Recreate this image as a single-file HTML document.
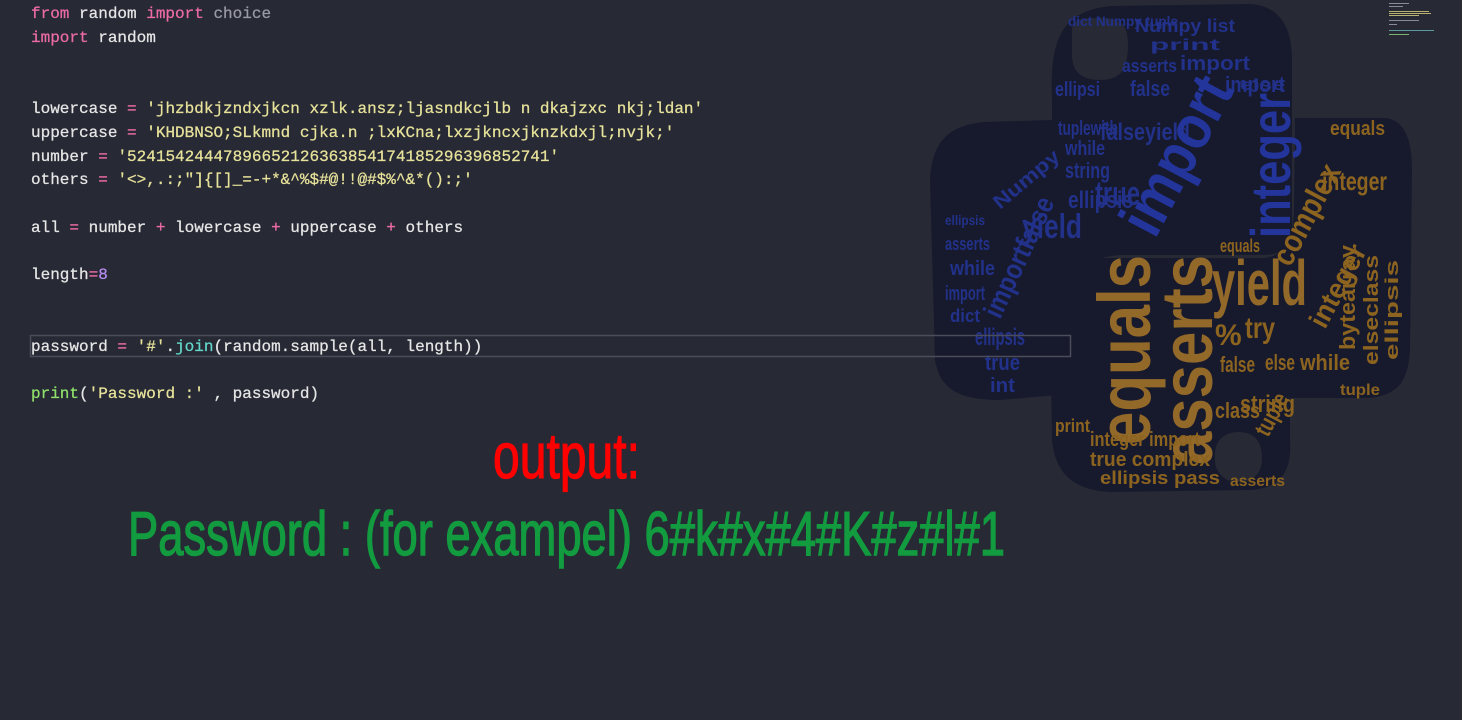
<!DOCTYPE html>
<html><head><meta charset="utf-8"><style>
html,body{margin:0;padding:0;background:#272935;width:1462px;height:720px;overflow:hidden;position:relative}
.c{position:absolute;left:31px;font:16px "Liberation Mono",monospace;color:#e6e6e6;white-space:pre;line-height:20px;-webkit-text-stroke:0.25px currentColor}
.k{color:#ec6ba6}.s{color:#e7e29a}.g{color:#9a9aa5}.p{color:#8fe06a}.n{color:#b58cf0}.t{color:#62d6c8}
svg{position:absolute;left:0;top:0}
</style></head><body>
<svg width="1462" height="720" viewBox="0 0 1462 720">
<path d="M1052,100 C1050,40 1060,12 1110,6 L1250,4 C1282,6 1292,30 1292,60 L1292,235 C1290,250 1280,255 1260,255 L1120,255 C1080,258 1062,280 1060,320 L1058,395 L1000,400 C960,400 940,390 935,360 L930,180 C932,140 950,125 985,122 L1052,120 Z M1072,30 C1072,20 1080,18 1100,18 C1122,18 1128,25 1128,45 C1128,70 1120,80 1100,80 C1080,80 1072,70 1072,55 Z" fill="#171a2c" fill-rule="evenodd"/>
<path d="M1295,118 L1385,118 C1405,120 1412,140 1412,170 L1410,350 C1408,385 1395,395 1370,398 L1290,398 L1290,440 C1292,470 1282,488 1250,490 L1110,492 C1070,490 1055,470 1052,440 L1050,310 C1052,272 1070,258 1110,258 L1265,258 C1285,255 1293,240 1294,210 Z M1215,455 C1215,440 1225,432 1238,432 C1255,432 1262,442 1262,458 C1262,475 1252,482 1238,482 C1224,482 1215,472 1215,460 Z" fill="#171a2c" fill-rule="evenodd"/>
<g font-family="Liberation Sans,sans-serif" font-weight="bold" fill="#22318a" lengthAdjust="spacingAndGlyphs">
<text x="1068" y="26" font-size="14" textLength="110" lengthAdjust="spacingAndGlyphs">dict Numpy tuple</text>
<text x="1135" y="32" font-size="18" textLength="100" lengthAdjust="spacingAndGlyphs">Numpy list</text>
<text x="1150" y="50" font-size="16" textLength="70" lengthAdjust="spacingAndGlyphs">print</text>
<text x="1180" y="70" font-size="20" textLength="70" lengthAdjust="spacingAndGlyphs">import</text>
<text x="1122" y="72" font-size="18" textLength="55" lengthAdjust="spacingAndGlyphs">asserts</text>
<text x="1130" y="96" font-size="22" textLength="40" lengthAdjust="spacingAndGlyphs">false</text>
<text x="1055" y="96" font-size="20" textLength="45" lengthAdjust="spacingAndGlyphs">ellipsi</text>
<text x="1225" y="92" font-size="22" textLength="60" lengthAdjust="spacingAndGlyphs">import</text>
<text x="1058" y="135" font-size="20" textLength="60" lengthAdjust="spacingAndGlyphs">tuplewith</text>
<text x="1065" y="155" font-size="20" textLength="40" lengthAdjust="spacingAndGlyphs">while</text>
<text x="1100" y="140" font-size="24" textLength="90" lengthAdjust="spacingAndGlyphs">falseyield</text>
<text x="1065" y="178" font-size="22" textLength="45" lengthAdjust="spacingAndGlyphs">string</text>
<text x="1068" y="208" font-size="24" textLength="65" lengthAdjust="spacingAndGlyphs">ellipsis</text>
<text x="945" y="225" font-size="14" textLength="40" lengthAdjust="spacingAndGlyphs">ellipsis</text>
<text x="945" y="250" font-size="18" textLength="45" lengthAdjust="spacingAndGlyphs">asserts</text>
<text x="950" y="275" font-size="20" textLength="45" lengthAdjust="spacingAndGlyphs">while</text>
<text x="945" y="300" font-size="20" textLength="40" lengthAdjust="spacingAndGlyphs">import</text>
<text x="950" y="322" font-size="18" textLength="30" lengthAdjust="spacingAndGlyphs">dict</text>
<text x="975" y="345" font-size="24" textLength="50" lengthAdjust="spacingAndGlyphs">ellipsis</text>
<text x="985" y="370" font-size="22" textLength="35" lengthAdjust="spacingAndGlyphs">true</text>
<text x="990" y="392" font-size="20" textLength="25" lengthAdjust="spacingAndGlyphs">int</text>
<text x="1950" y="0" font-size="1"> </text>
<text transform="translate(1155,240) rotate(-62)" font-size="62" fill="#23349a" textLength="170" lengthAdjust="spacingAndGlyphs">import</text>
<text transform="translate(1290,238) rotate(-90)" font-size="56" fill="#23349a" textLength="145" lengthAdjust="spacingAndGlyphs">integer</text>
<text x="1095" y="205" font-size="34" textLength="45" lengthAdjust="spacingAndGlyphs">true</text>
<text x="1022" y="238" font-size="34" textLength="60" lengthAdjust="spacingAndGlyphs">yield</text>
<text transform="translate(1000,320) rotate(-65)" font-size="28" textLength="130" lengthAdjust="spacingAndGlyphs">importfalse</text>
<text transform="translate(1000,210) rotate(-40)" font-size="20" textLength="80" lengthAdjust="spacingAndGlyphs">Numpy</text>
<text x="1240" y="90" font-size="16" textLength="45" lengthAdjust="spacingAndGlyphs">else</text>
</g>
<g font-family="Liberation Sans,sans-serif" font-weight="bold" fill="#8c6420">
<text x="1330" y="135" font-size="20" textLength="55" lengthAdjust="spacingAndGlyphs">equals</text>
<text x="1322" y="190" font-size="26" textLength="65" lengthAdjust="spacingAndGlyphs">integer</text>
<text transform="translate(1290,268) rotate(-62)" font-size="32" textLength="110" lengthAdjust="spacingAndGlyphs">complex</text>
<text transform="translate(1325,330) rotate(-62)" font-size="28" textLength="90" lengthAdjust="spacingAndGlyphs">integer</text>
<text transform="translate(1355,350) rotate(-90)" font-size="22" textLength="105" lengthAdjust="spacingAndGlyphs">bytearray</text>
<text transform="translate(1378,365) rotate(-90)" font-size="20" textLength="110" lengthAdjust="spacingAndGlyphs">elseclass</text>
<text transform="translate(1398,360) rotate(-90)" font-size="18" textLength="100" lengthAdjust="spacingAndGlyphs">ellipsis</text>
<text transform="translate(1150,445) rotate(-90)" font-size="74" fill="#93692a" textLength="190" lengthAdjust="spacingAndGlyphs">equals</text>
<text transform="translate(1212,465) rotate(-90)" font-size="72" fill="#93692a" textLength="210" lengthAdjust="spacingAndGlyphs">asserts</text>
<text x="1212" y="305" font-size="64" fill="#93692a" textLength="95" lengthAdjust="spacingAndGlyphs">yield</text>
<text x="1215" y="345" font-size="30">%</text>
<text x="1245" y="338" font-size="30" textLength="30" lengthAdjust="spacingAndGlyphs">try</text>
<text x="1240" y="412" font-size="24" textLength="55" lengthAdjust="spacingAndGlyphs">string</text>
<text transform="translate(1268,438) rotate(-62)" font-size="24" textLength="45" lengthAdjust="spacingAndGlyphs">tuple</text>
<text x="1215" y="418" font-size="22" textLength="45" lengthAdjust="spacingAndGlyphs">class</text>
<text x="1090" y="446" font-size="20" textLength="110" lengthAdjust="spacingAndGlyphs">integer import</text>
<text x="1090" y="466" font-size="20" textLength="120" lengthAdjust="spacingAndGlyphs">true complex</text>
<text x="1100" y="484" font-size="18" textLength="120" lengthAdjust="spacingAndGlyphs">ellipsis pass</text>
<text x="1055" y="432" font-size="18" textLength="35" lengthAdjust="spacingAndGlyphs">print</text>
<text x="1300" y="370" font-size="22" textLength="50" lengthAdjust="spacingAndGlyphs">while</text>
<text x="1265" y="370" font-size="22" textLength="30" lengthAdjust="spacingAndGlyphs">else</text>
<text x="1220" y="372" font-size="22" textLength="35" lengthAdjust="spacingAndGlyphs">false</text>
<text x="1230" y="486" font-size="16" textLength="55" lengthAdjust="spacingAndGlyphs">asserts</text>
<text x="1220" y="252" font-size="18" textLength="40" lengthAdjust="spacingAndGlyphs">equals</text>
<text x="1340" y="395" font-size="16" textLength="40" lengthAdjust="spacingAndGlyphs">tuple</text>
</g>
<g fill="#8a8a9a">
<rect x="1389" y="3" width="20" height="1"/><rect x="1389" y="6" width="14" height="1"/>
<rect x="1389" y="11" width="40" height="1" fill="#b8b070"/><rect x="1389" y="13" width="42" height="1" fill="#b8b070"/><rect x="1389" y="15" width="30" height="1" fill="#b8b070"/>
<rect x="1389" y="20" width="30" height="1"/><rect x="1389" y="24" width="8" height="1"/>
<rect x="1389" y="30" width="45" height="1" fill="#5a9aa0"/><rect x="1389" y="34" width="20" height="1" fill="#7ab070"/>
</g>
<rect x="30.5" y="335.5" width="1040" height="21" fill="none" stroke="#4a4d5c" stroke-width="1.5"/>
<text x="493" y="478" font-family="Liberation Sans,sans-serif" font-size="64" fill="#ff0000" stroke="#ff0000" stroke-width="1.2" textLength="147" lengthAdjust="spacingAndGlyphs">output:</text>
<text x="128" y="555" font-family="Liberation Sans,sans-serif" font-size="62" fill="#129b3f" stroke="#129b3f" stroke-width="1.4" textLength="877" lengthAdjust="spacingAndGlyphs">Password : (for exampel) 6#k#x#4#K#z#l#1</text>
</svg>
<div class="c" style="top:4px"><span class="k">from</span> random <span class="k">import</span> <span class="g">choice</span></div>
<div class="c" style="top:28px"><span class="k">import</span> random</div>
<div class="c" style="top:99px">lowercase <span class="k">=</span> <span class="s">'jhzbdkjzndxjkcn xzlk.ansz;ljasndkcjlb n dkajzxc nkj;ldan'</span></div>
<div class="c" style="top:123px">uppercase <span class="k">=</span> <span class="s">'KHDBNSO;SLkmnd cjka.n ;lxKCna;lxzjkncxjknzkdxjl;nvjk;'</span></div>
<div class="c" style="top:147px">number <span class="k">=</span> <span class="s">'52415424447896652126363854174185296396852741'</span></div>
<div class="c" style="top:170px">others <span class="k">=</span> <span class="s">'&lt;&gt;,.:;"]{[]_=-+*&amp;^%$#@!!@#$%^&amp;*():;'</span></div>
<div class="c" style="top:218px">all <span class="k">=</span> number <span class="k">+</span> lowercase <span class="k">+</span> uppercase <span class="k">+</span> others</div>
<div class="c" style="top:265px">length<span class="k">=</span><span class="n">8</span></div>
<div class="c" style="top:337px">password <span class="k">=</span> <span class="s">'#'</span>.<span class="t">join</span>(random.sample(all, length))</div>
<div class="c" style="top:384px"><span class="p">print</span>(<span class="s">'Password :'</span> , password)</div>
</body></html>
